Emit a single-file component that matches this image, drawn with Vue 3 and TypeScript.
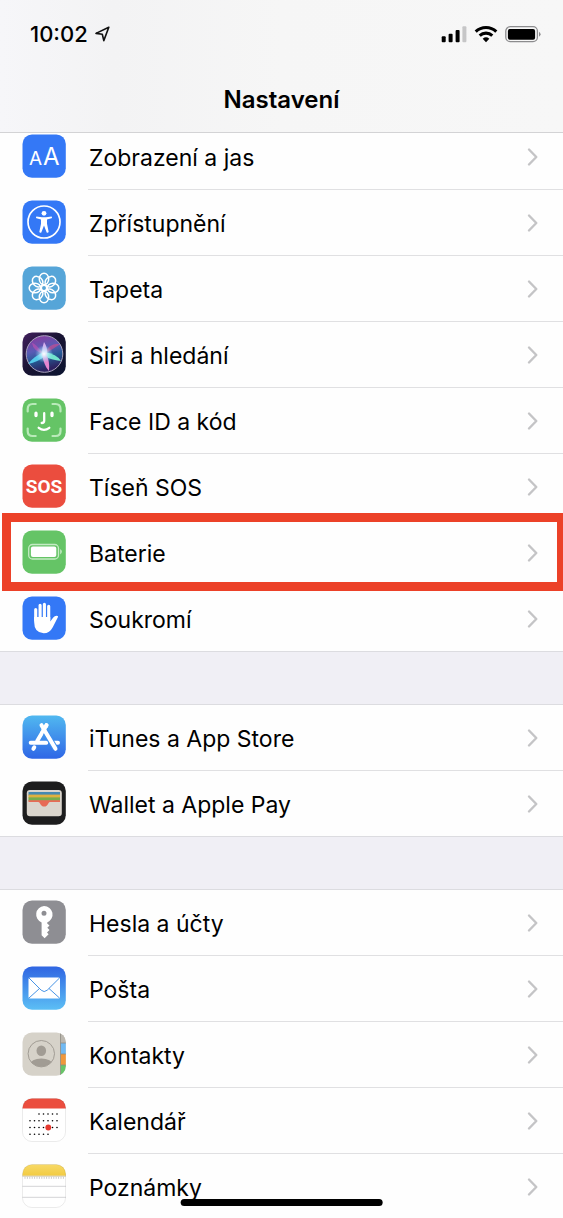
<script setup lang="ts">
interface Item {
  id: string
  label: string
  highlighted?: boolean
}

const groups: Item[][] = [
  [
    { id: 'display', label: 'Zobrazení a jas' },
    { id: 'accessibility', label: 'Zpřístupnění' },
    { id: 'wallpaper', label: 'Tapeta' },
    { id: 'siri', label: 'Siri a hledání' },
    { id: 'faceid', label: 'Face ID a kód' },
    { id: 'sos', label: 'Tíseň SOS' },
    { id: 'battery', label: 'Baterie', highlighted: true },
    { id: 'privacy', label: 'Soukromí' },
  ],
  [
    { id: 'appstore', label: 'iTunes a App Store' },
    { id: 'wallet', label: 'Wallet a Apple Pay' },
  ],
  [
    { id: 'passwords', label: 'Hesla a účty' },
    { id: 'mail', label: 'Pošta' },
    { id: 'contacts', label: 'Kontakty' },
    { id: 'calendar', label: 'Kalendář' },
    { id: 'notes', label: 'Poznámky' },
  ],
]

const petals = [0, 45, 90, 135, 180, 225, 270, 315]

const dotColumns = [8, 12.5, 17, 21.5, 26, 30.5, 35]
const calendarDots = [
  { y: 16, from: 2, to: 6 },
  { y: 22.7, from: 0, to: 6 },
  { y: 29.5, from: 0, to: 6 },
  { y: 36.3, from: 0, to: 4 },
].flatMap(({ y, from, to }) => dotColumns.slice(from, to + 1).map((x) => ({ x, y })))

const noteTicks = Array.from({ length: 17 }, (_, i) => 3 + i * 2.4)
</script>

<template>
  <div class="screen">
    <header class="top">
      <div class="status">
        <div class="clock">
          <span>10:02</span>
          <svg width="15" height="16" viewBox="0 0 15 16" aria-hidden="true">
            <path d="M13.8 1.2 1 7.4l6.300.8 1.500 6.400z" fill="none" stroke="#111" stroke-width="1.6" stroke-linejoin="round" />
          </svg>
        </div>
        <div class="indicators">
          <svg width="26" height="18" viewBox="0 0 26 18" aria-hidden="true">
            <rect x="0.7" y="11.3" width="4" height="6" rx="1" />
            <rect x="7.6" y="8.7" width="4" height="8.6" rx="1" />
            <rect x="14.6" y="5" width="4" height="12.3" rx="1" />
            <rect x="21.4" y="1.3" width="4" height="16" rx="1" fill="#c6c6c7" />
          </svg>
          <svg width="24" height="18" viewBox="0 0 24 18" aria-hidden="true">
            <g fill="none" stroke="#000" stroke-width="3.1">
              <path d="M1.7 6.6a15 15 0 0 1 20.6 0" />
              <path d="M5.7 10.6a9.3 9.3 0 0 1 12.6 0" />
            </g>
            <path d="M8.7 13.8a5 5 0 0 1 6.6 0L12 17.2z" />
          </svg>
          <svg width="37" height="18" viewBox="0 0 37 18" aria-hidden="true">
            <rect x="0.8" y="1.7" width="31.6" height="15" rx="4.4" fill="none" stroke="#8c8c8e" stroke-width="1.3" />
            <rect x="2.9" y="3.9" width="27.2" height="10.8" rx="2" />
            <path d="M34 6.7q3.2 2.5 0 5z" fill="#8c8c8e" />
          </svg>
        </div>
      </div>
      <h1>Nastavení</h1>
    </header>

    <main class="content">
      <ul v-for="(group, g) in groups" :key="g" class="group">
        <li v-for="item in group" :key="item.id" class="row" :class="{ marked: item.highlighted }">
          <a :href="'#' + item.id">
            <svg class="icon" viewBox="0 0 44 44" aria-hidden="true">
              <defs v-if="item.id === 'display'">
                <clipPath id="tile"><rect x="0.5" y="0.5" width="43.3" height="43.3" rx="9.5" /></clipPath>
                <linearGradient id="store" x2="0" y2="1">
                  <stop offset="0" stop-color="#51b9f0" /><stop offset="1" stop-color="#2f66e6" />
                </linearGradient>
                <linearGradient id="post" x2="0" y2="1">
                  <stop offset="0" stop-color="#2f64e2" /><stop offset="1" stop-color="#5cbff5" />
                </linearGradient>
                <linearGradient id="pad" x2="0" y2="1">
                  <stop offset="0" stop-color="#f8da68" /><stop offset="1" stop-color="#f2cb42" />
                </linearGradient>
                <linearGradient id="night" x2="1" y2="1">
                  <stop offset="0" stop-color="#43205e" /><stop offset="0.5" stop-color="#171331" /><stop offset="1" stop-color="#0b1430" />
                </linearGradient>
                <linearGradient id="orb" x2="0.3" y2="1">
                  <stop offset="0" stop-color="#94349b" /><stop offset="0.45" stop-color="#5a5cb6" /><stop offset="0.7" stop-color="#255a94" /><stop offset="1" stop-color="#2d2260" />
                </linearGradient>
                <radialGradient id="glow">
                  <stop offset="0" stop-color="#fff" /><stop offset="0.3" stop-color="#d8f4ff" stop-opacity="0.8" /><stop offset="1" stop-color="#8bd4ff" stop-opacity="0" />
                </radialGradient>
              </defs>

              <g clip-path="url(#tile)">
                <template v-if="item.id === 'display'">
                  <rect width="44" height="44" fill="#3478f6" />
                  <text x="7" y="31" class="letters small">A</text>
                  <text x="21" y="31" class="letters">A</text>
                </template>

                <template v-else-if="item.id === 'accessibility'">
                  <rect width="44" height="44" fill="#3478f6" />
                  <circle cx="22" cy="22" r="16" fill="none" stroke="#fff" stroke-width="1.7" />
                  <circle cx="22" cy="13.3" r="2.4" fill="#fff" />
                  <path d="M14.4 16.6l5.6.7h4l5.6-.7q1 .9 0 1.7L25 19.6v4.2l1.7 8.2q-.9 1.3-2 .4L22 25.4l-2.700 7q-1.100.9-2-.4L19 23.800v-4.200l-4.600-1.300q-1-.8 0-1.700z" fill="#fff" />
                </template>

                <template v-else-if="item.id === 'wallpaper'">
                  <rect width="44" height="44" fill="#56a5d8" />
                  <g fill="none" stroke="#fff" stroke-width="1.5">
                    <ellipse v-for="angle in petals" :key="angle" cx="22" cy="13" rx="4.7" ry="5.8" :transform="`rotate(${angle} 22 22)`" />
                    <circle cx="22" cy="22" r="2.7" />
                  </g>
                </template>

                <template v-else-if="item.id === 'siri'">
                  <rect width="44" height="44" fill="url(#night)" />
                  <circle cx="22.5" cy="22" r="18.3" fill="url(#orb)" stroke="#a9a3bd" stroke-width="1" />
                  <path d="M22 22Q28 10 38 12q-5 4-16 10z" fill="#d94a8a" opacity="0.6" />
                  <path d="M22 22Q12 10 10 11q1 8 12 11z" fill="#c552b4" opacity="0.6" />
                  <path d="M22 20Q12 24 6 32q10-2 17-8z" fill="#55c9e9" />
                  <path d="M22 20Q35 22 39 29q-10-1-17-5z" fill="#71e4cc" />
                  <path d="M20 22q0-7 2-12 4 6 3 12z" fill="#d7b1ed" />
                  <path d="M20 22q2 12 7 17 1-10-3-17z" fill="#e685cf" />
                  <circle cx="22" cy="22" r="9" fill="url(#glow)" />
                </template>

                <template v-else-if="item.id === 'faceid'">
                  <rect width="44" height="44" fill="#65c466" />
                  <g fill="none" stroke-linecap="round">
                    <path d="M5.7 13.5V11q0-5 5-5h3M30.5 6h3q5 0 5 5v2.5M38.5 30.5V33q0 5-5 5h-3M13.7 38h-3q-5 0-5-5v-2.5" stroke="#b9eab9" stroke-width="2.2" />
                    <path d="M22.2 15.2v7.6q0 2.2-2.5 2.2M16.7 29.8q5.3 4.2 10.6 0" stroke="#fff" stroke-width="2.3" />
                    <path d="M14 15.2v2.4M30 15.2v2.4" stroke="#fff" stroke-width="3.3" />
                  </g>
                </template>

                <template v-else-if="item.id === 'sos'">
                  <rect width="44" height="44" fill="#eb4d3e" />
                  <text x="22" y="29" class="sos">SOS</text>
                </template>

                <template v-else-if="item.id === 'battery'">
                  <rect width="44" height="44" fill="#65c466" />
                  <rect x="6.7" y="14.5" width="29.8" height="14.5" rx="3.8" fill="none" stroke="#c5ebc5" stroke-width="1.3" />
                  <rect x="8.9" y="16.6" width="25.4" height="10.3" rx="2" fill="#fff" />
                  <path d="M38.2 19q3.4 2.7 0 5.4z" fill="#c5ebc5" />
                </template>

                <template v-else-if="item.id === 'privacy'">
                  <rect width="44" height="44" fill="#3478f6" />
                  <g stroke="#fff" stroke-linecap="round" stroke-width="3.1">
                    <path d="M13.7 24V13.5M18.1 23V9.2M22.4 23V8.2M26.7 24V10.2" />
                  </g>
                  <path d="M12.15 21h16.1v4.5l3-4q2-2.5 4.4-1.6.9.4.1 1.7l-5 9.6Q27.7 37.3 21.7 37.3 12.15 36.8 12.15 26z" fill="#fff" />
                </template>

                <template v-else-if="item.id === 'appstore'">
                  <rect width="44" height="44" fill="url(#store)" />
                  <g fill="none" stroke="#fff" stroke-width="4" stroke-linecap="round">
                    <path d="M8.7 27.8h15.6M31 27.8h5" />
                    <path d="M24.5 10.2 15.2 26M12.3 32.3l-.9 1.5" />
                  </g>
                  <path d="M21.5 13.6l12 20.2" stroke="#4190ed" stroke-width="6" />
                  <path d="M19.5 10.2l14 23.6" stroke="#fff" stroke-width="4" stroke-linecap="round" />
                  <path d="M24.5 10.2l-4 6.8" stroke="#fff" stroke-width="4" stroke-linecap="round" />
                </template>

                <template v-else-if="item.id === 'wallet'">
                  <rect width="44" height="44" fill="#1d1d1e" />
                  <rect x="4.8" y="9" width="35" height="26.3" rx="3.2" fill="#dad5cd" />
                  <rect x="6.5" y="11" width="31.5" height="3.5" fill="#4689b1" />
                  <rect x="6.5" y="13.6" width="31.5" height="3.5" fill="#dfb03f" />
                  <rect x="6.5" y="16.4" width="31.5" height="3.5" fill="#77ad4d" />
                  <path d="M6.5 19.3H38v1.8H28.3q-1.3 0-2 1.3Q25 25.5 22.2 25.5T18 22.4q-.7-1.3-2-1.3H6.5z" fill="#e76a56" />
                </template>

                <template v-else-if="item.id === 'passwords'">
                  <rect width="44" height="44" fill="#8e8e93" />
                  <path fill-rule="evenodd" d="M22 6a8.5 8.5 0 0 1 3.2 16.4v1.2l2.3 2-2.2 2.2 2.2 2.3-2.5 2.3 1.6 1.8-4 4.1-3-3V22.4A8.5 8.5 0 0 1 22 6zm0 4.7a2.5 2.5 0 1 0 0 5 2.5 2.5 0 0 0 0-5z" fill="#fff" />
                </template>

                <template v-else-if="item.id === 'mail'">
                  <rect width="44" height="44" fill="url(#post)" />
                  <rect x="6.5" y="11.5" width="31.5" height="21" rx="1.5" fill="#fff" />
                  <path d="M7 12l12.2 12.2q3 2.8 6 0L37.5 12M7 32l10.5-9.5M37.5 32 27 22.5" fill="none" stroke="#4794e6" stroke-width="1" />
                </template>

                <template v-else-if="item.id === 'contacts'">
                  <rect width="44" height="44" fill="#d6d2c9" />
                  <clipPath id="portrait"><circle cx="19.3" cy="21.7" r="13" /></clipPath>
                  <ellipse cx="19.3" cy="18.7" rx="4.8" ry="5.3" fill="#a19c94" />
                  <ellipse cx="19.3" cy="32.5" rx="11.5" ry="6" fill="#a19c94" clip-path="url(#portrait)" />
                  <circle cx="19.3" cy="21.7" r="13.2" fill="none" stroke="#a19c94" stroke-width="1" />
                  <path d="M38.5 0H44v11h-5.5z" fill="#bbb7af" />
                  <path d="M38.5 11H44v11h-5.5z" fill="#71b9f2" />
                  <path d="M38.5 22H44v11h-5.5z" fill="#ef973b" />
                  <path d="M38.5 33H44v11h-5.5z" fill="#67c568" />
                  <path d="M38.5 0v44M38.5 11H44M38.5 22H44M38.5 33H44" stroke="#8e8b83" stroke-width="0.8" />
                </template>

                <template v-else-if="item.id === 'calendar'">
                  <rect width="44" height="44" fill="#fff" />
                  <rect width="44" height="10.5" fill="#eb4d3e" />
                  <circle v-for="dot in calendarDots" :key="`${dot.x}-${dot.y}`" :cx="dot.x" :cy="dot.y" r="0.8" />
                  <circle cx="26.3" cy="29.5" r="2.9" fill="#e5392f" />
                </template>

                <template v-else>
                  <rect width="44" height="44" fill="#fff" />
                  <rect width="44" height="11.8" fill="url(#pad)" />
                  <path d="M0 12.2h44" stroke="#cfc6a8" stroke-width="0.9" />
                  <path v-for="x in noteTicks" :key="x" :d="`M${x} 12.8v2`" stroke="#bdbdbd" stroke-width="0.8" />
                  <path d="M0 22.3h44M0 33.3h44" stroke="#d4d4d6" stroke-width="1" />
                </template>
              </g>
              <rect v-if="item.id === 'calendar' || item.id === 'notes'" x="0.5" y="0.5" width="43" height="43" rx="9.5" fill="none" stroke="#000" stroke-opacity="0.1" stroke-width="0.8" />
            </svg>

            <span class="label">
              <span class="name">{{ item.label }}</span>
              <svg class="chevron" width="12" height="20" viewBox="0 0 12 20" aria-hidden="true">
                <path d="M2 2.5 9.3 10 2 17.5" fill="none" stroke="#c4c4c6" stroke-width="2.4" stroke-linecap="round" stroke-linejoin="round" />
              </svg>
            </span>
          </a>
        </li>
      </ul>
    </main>

    <div class="home-bar"></div>
  </div>
</template>

<style>
body {
  margin: 0;
}
</style>

<style scoped>
.screen {
  position: relative;
  display: flex;
  flex-direction: column;
  height: 100vh;
  overflow: hidden;
  background: #f0eff5;
  color: #000;
  font-family: Inter, "Noto Sans", sans-serif;
}

.top {
  position: relative;
  z-index: 1;
  flex: none;
  border-bottom: 1px solid #d3d3d5;
  background: linear-gradient(90deg, #f6f6f9 0, #f3f3f4 20%, #f6f6f6 50%, #f7f7f7 100%);
}

.status {
  display: flex;
  align-items: center;
  justify-content: space-between;
  padding: 20px 21px 0 30px;
}

.clock,
.indicators {
  display: flex;
  align-items: center;
  gap: 7px;
}

.clock {
  font-size: 22px;
  font-weight: 500;
  line-height: 28px;
}

h1 {
  margin: 0;
  padding: 35px 0 15px;
  text-align: center;
  font-size: 24px;
  font-weight: 600;
  line-height: 34px;
}

.content {
  display: flex;
  flex: 1;
  flex-direction: column;
  gap: 53px;
  min-height: 0;
  margin-top: -9px;
  overflow: hidden auto;
  scrollbar-width: none;
}

.group {
  flex: none;
  margin: 0;
  padding: 0;
  list-style: none;
  background: #fefefe;
  box-shadow: 0 -1px #dcdce0;
}

.row {
  position: relative;
}

.row a {
  display: flex;
  gap: 22px;
  padding-left: 22px;
  color: inherit;
  text-decoration: none;
}

.row:last-child a {
  border-bottom: 1px solid #dcdce0;
}

.icon {
  flex: none;
  width: 44px;
  height: 44px;
  margin: 10px 0 12px;
}

.row:last-child .icon {
  margin-bottom: 11px;
}

.label {
  display: flex;
  flex: 1;
  align-items: center;
  justify-content: space-between;
  padding: 0 24px 0 1px;
  border-bottom: 1px solid #e0e0e2;
  font-size: 23px;
  line-height: 30px;
}

.name {
  padding-top: 2px;
}

.row:last-child .label {
  border-bottom: 0;
}

.marked::after {
  position: absolute;
  z-index: 1;
  inset: -7px -3px -5px 2px;
  border: 9px solid #ec4128;
  content: "";
  pointer-events: none;
}

.letters {
  fill: #fff;
  font-size: 24px;
  font-weight: 400;
}

.letters.small {
  font-size: 19px;
}

.sos {
  fill: #fff;
  font-family: Roboto, sans-serif;
  font-size: 19px;
  font-weight: 700;
  text-anchor: middle;
}

.home-bar {
  position: absolute;
  z-index: 2;
  bottom: 12px;
  left: 50%;
  width: 36%;
  height: 7px;
  border-radius: 4px;
  background: #000;
  transform: translateX(-50%);
}
</style>
